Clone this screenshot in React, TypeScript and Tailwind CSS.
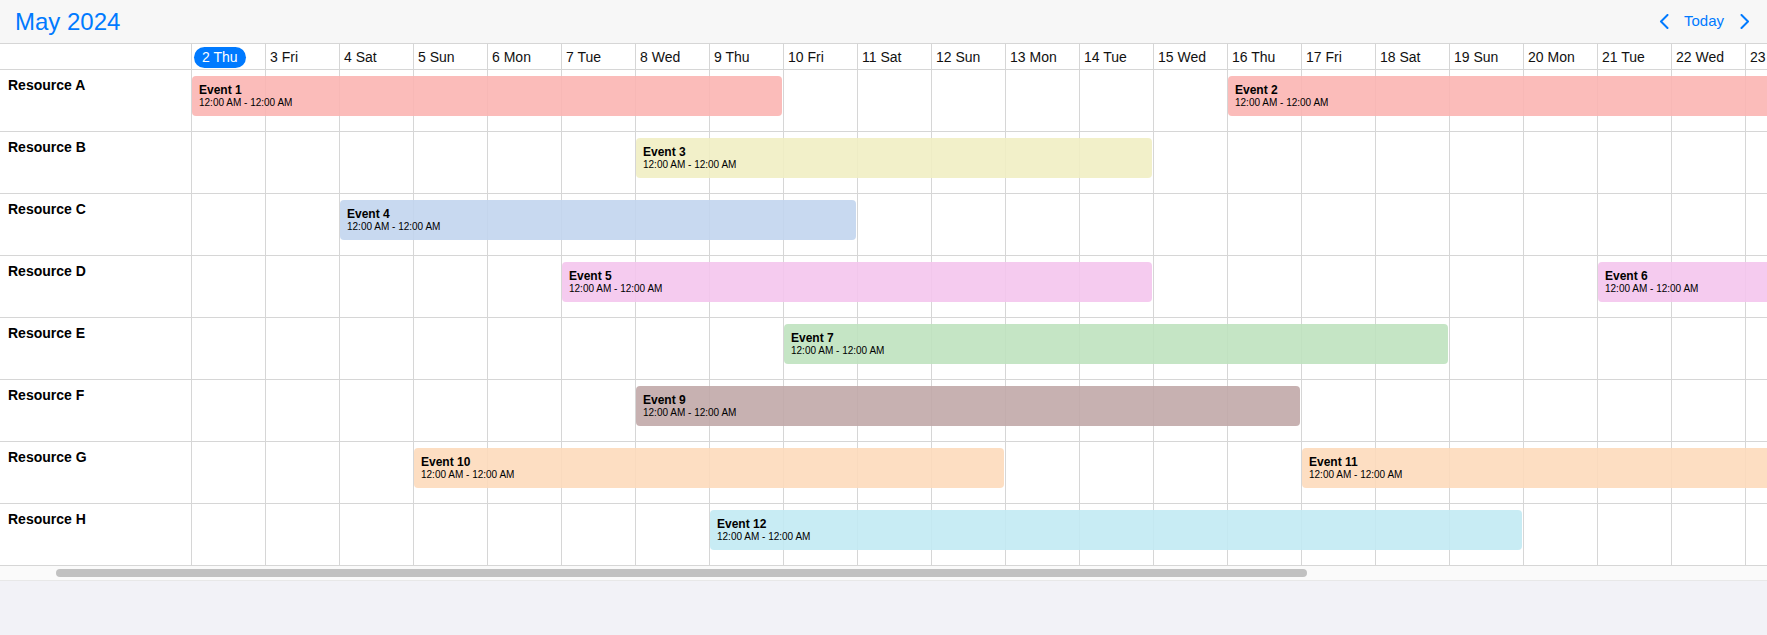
import React from "react"

const COL = 74

const resources = [
  "Resource A",
  "Resource B",
  "Resource C",
  "Resource D",
  "Resource E",
  "Resource F",
  "Resource G",
  "Resource H",
]

const weekdays = ["Thu", "Fri", "Sat", "Sun", "Mon", "Tue", "Wed"]

const days = Array.from({ length: 30 }, (_, i) => ({
  num: i + 2,
  name: weekdays[i % 7],
}))

type CalEvent = { id: number; row: number; start: number; span: number; color: string }

const events: CalEvent[] = [
  { id: 1, row: 0, start: 0, span: 8, color: "bg-[#fbb5b2e6]" },
  { id: 2, row: 0, start: 14, span: 12, color: "bg-[#fbb5b2e6]" },
  { id: 3, row: 1, start: 6, span: 7, color: "bg-[#f1eec3e6]" },
  { id: 4, row: 2, start: 2, span: 7, color: "bg-[#c2d5eee6]" },
  { id: 5, row: 3, start: 5, span: 8, color: "bg-[#f4c5ede6]" },
  { id: 6, row: 3, start: 19, span: 8, color: "bg-[#f4c5ede6]" },
  { id: 7, row: 4, start: 8, span: 9, color: "bg-[#bfe2bfe6]" },
  { id: 9, row: 5, start: 6, span: 9, color: "bg-[#c1a9a9e6]" },
  { id: 10, row: 6, start: 3, span: 8, color: "bg-[#fddabbe6]" },
  { id: 11, row: 6, start: 15, span: 12, color: "bg-[#fddabbe6]" },
  { id: 12, row: 7, start: 7, span: 11, color: "bg-[#c2eaf3e6]" },
]

const Chevron = ({ dir }: { dir: "left" | "right" }) => (
  <svg width="10" height="15" viewBox="0 0 10 15" fill="none">
    <polyline
      points={dir === "left" ? "8.5,1 2,7.5 8.5,14" : "1.5,1 8,7.5 1.5,14"}
      stroke="#007aff"
      strokeWidth="2"
      strokeLinecap="round"
      strokeLinejoin="round"
    />
  </svg>
)

const App = () => {
  return (
    <div className="flex min-h-[635px] w-full flex-col bg-[#f2f2f7] font-['Liberation_Sans',Arial,sans-serif]">
      {/* toolbar */}
      <div className="flex h-[44px] items-center justify-between border-b border-[#d6d6d6] bg-[#f7f7f7] pl-[15px] pr-[17px]">
        <h1 className="text-[24px] leading-none text-[#007aff]">May 2024</h1>
        <div className="flex items-center">
          <Chevron dir="left" />
          <span className="ml-[15px] mr-[16px] text-[15px] text-[#007aff]">Today</span>
          <Chevron dir="right" />
        </div>
      </div>

      {/* timeline */}
      <div className="w-full overflow-hidden bg-white">
        <div className="flex h-[26px] w-max border-b border-[#d6d6d6]">
          <div className="w-[192px] shrink-0 border-r border-[#d6d6d6]"></div>
          {days.map((d, i) => (
            <div
              key={d.num}
              className={`flex w-[74px] shrink-0 items-center border-r border-[#d6d6d6] pt-[1px] text-[14px] text-[#111] ${
                i === 0 ? "pl-[2px]" : "pl-[4px]"
              }`}
            >
              {i === 0 ? (
                <span className="rounded-full bg-[#007aff] px-2 leading-[21px] text-white">
                  {d.num} {d.name}
                </span>
              ) : (
                <span>
                  {d.num} {d.name}
                </span>
              )}
            </div>
          ))}
        </div>

        {resources.map((name, r) => (
          <div key={name} className="flex h-[62px] w-max border-b border-[#d6d6d6]">
            <div className="w-[192px] shrink-0 border-r border-[#d6d6d6] pl-2 pt-[5px] text-[14px] font-bold leading-5 text-black">
              {name}
            </div>
            <div className="relative flex">
              {days.map((d) => (
                <div key={d.num} className="h-full w-[74px] shrink-0 border-r border-[#d6d6d6]"></div>
              ))}
              {events
                .filter((e) => e.row === r)
                .map((e) => (
                  <div
                    key={e.id}
                    className={`absolute top-[6px] h-[40px] rounded-[4px] pl-[7px] pt-[7px] text-black ${e.color}`}
                    style={{ left: e.start * COL, width: e.span * COL - 2 }}
                  >
                    <p className="text-[12px] font-bold leading-[14px]">Event {e.id}</p>
                    <p className="text-[10px] leading-[12px]">12:00 AM - 12:00 AM</p>
                  </div>
                ))}
            </div>
          </div>
        ))}
      </div>

      {/* scrollbar */}
      <div className="flex h-[15px] items-center border-b border-[#e8e8e8] bg-[#fafafa] pl-[56px]">
        <div className="h-[8px] w-[1251px] rounded-full bg-[#c1c1c1]"></div>
      </div>
    </div>
  )
}

export default App
